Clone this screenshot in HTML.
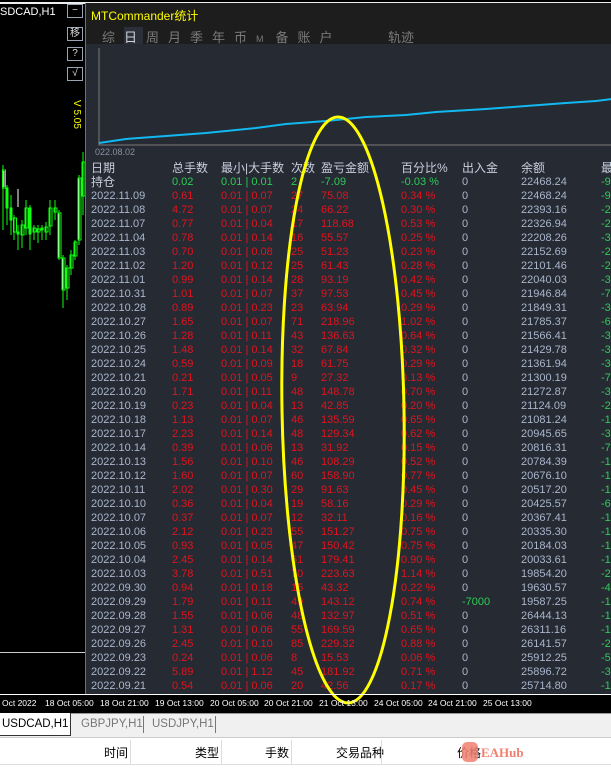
<!DOCTYPE html>
<html><head><meta charset="utf-8"><style>
*{margin:0;padding:0;box-sizing:border-box}
body{width:611px;height:770px;overflow:hidden;background:#000;position:relative;font-family:"Liberation Sans","Noto Sans CJK SC",sans-serif}
.a{position:absolute;white-space:nowrap}
#panel{position:absolute;left:85px;top:3px;width:526px;height:691px;background:#252a33;border-left:1px solid #6b7380}
#hdr{position:absolute;left:0;top:0;width:526px;height:41px;background:#1d1d1d}
.r{position:absolute;left:0;height:14px;font-size:11px;line-height:14px;color:#e0141e;width:526px}
.r span{position:absolute;top:0}
.r .d{left:5px;color:#aab6cc}.r .t{left:86px}.r .m{left:135px}.r .c{left:205px}.r .p{left:235px}.r .q{left:315px}.r .i{left:376px;color:#aab6cc}.r .b{left:435px;color:#aab6cc}.r .l{left:515px;color:#2ecc55}
.btn{position:absolute;left:67px;width:16px;height:14px;border:1px solid #9aa4b4;color:#ddd;font-size:10px;line-height:12px;text-align:center}
.ax span{position:absolute;top:0}
</style></head><body>
<div class="a" style="left:0;top:2px;width:611px;height:2px;background:#eee"></div>
<div class="a" style="left:0;top:6px;font-size:11px;color:#fff">SDCAD,H1</div>
<div class="btn" style="top:4px">−</div>
<div class="btn" style="top:27px">移</div>
<div class="btn" style="top:47px">?</div>
<div class="btn" style="top:67px">√</div>
<div class="a" style="top:100px;color:#ff0;font-size:10px;transform:rotate(90deg);transform-origin:left top;left:82px">V 5.05</div>
<svg class="a" style="left:0;top:140px" width="85" height="200">
<g stroke="#1f1" fill="none" stroke-width="1">
<path d="M3 25V90M2.5 30h3v18h-3zM7 45V85M6 48h2v20h-2zM11 55V95M10 68h2v12h-2zM14 75V100M13.5 78h3v14h-3zM18 85V110M17 92h2v2h-2zM22 80V108M21 85h3v10h-3zM26 60V95M25 68h3v20h-3zM30 65V110M29 68h2v26h-2zM34 85V100M33 88h3v4h-3zM38 85V103M37 89h3v3h-3zM42 85V100M41 88h2v2h-2zM46 82V100M45 87h3v5h-3zM50 60V95M49 68h3v18h-3zM55 60V80M54 68h3v4h-3zM59 70V120M58 73h3v45h-3zM63 115V168M62 118h3v32h-3zM67 125V160M66 128h3v20h-3zM71 110V135M70 115h3v13h-3zM75 100V120M74 102h3v14h-3zM79 35V105M78 38h3v62h-3zM83 12V75M82 22h3v34h-3z"/></g>
<g stroke="#fff" stroke-width="1"><path d="M4 31v16M18 49v18M59 74v43M63 119v30M79 39v60"/></g></svg>
<div class="a" style="left:0;top:652px;width:85px;height:1px;background:#ccc"></div>
<div id="panel">
<div id="hdr">
<div class="a" style="left:5px;top:4px;color:#ff0;font-size:12px">MTCommander统计</div>
<div class="a" style="left:38px;top:24px;width:19px;height:17px;background:#2a2f38"></div>
<div class="a" style="left:16px;top:24px;color:#7a7a7a;font-size:13px;letter-spacing:9px">综<span style="color:#cfd4dc">日</span>周月季年币<span style="font-size:9px;letter-spacing:12px">M</span>备账户</div>
<div class="a" style="left:302px;top:24px;color:#7a7a7a;font-size:13px">轨迹</div>
</div>
<svg class="a" style="left:0;top:41px" width="526" height="110">
<path d="M13 4V101H526" stroke="#7a7a7a" fill="none"/>
<path d="M13 99 L40 95 L80 92 L120 89 L170 84 L200 80 L240 77 L280 73 L320 71 L350 68 L400 65 L440 62 L480 59 L510 57 L526 55" stroke="#12b8f0" stroke-width="2" fill="none"/>
</svg>
<div class="a" style="left:9px;top:144px;color:#8892a0;font-size:9px">022.08.02</div>
<div class="r" style="top:158px;font-size:12px;color:#c8d0de"><span style="left:5px">日期</span><span style="left:86px">总手数</span><span style="left:135px">最小|大手数</span><span style="left:205px">次数</span><span style="left:235px">盈亏金额</span><span style="left:315px">百分比%</span><span style="left:376px">出入金</span><span style="left:435px">余额</span><span style="left:515px">最</span></div>
<div class="r" style="top:172px;color:#2ecc55"><span class="d" style="font-size:12px;color:#c8d0de">持仓</span><span class="t">0.02</span><span class="m">0.01 | 0.01</span><span class="c">2</span><span class="p">-7.09</span><span class="q">-0.03 %</span><span class="i">0</span><span class="b">22468.24</span><span class="l">-9</span></div>
<div class="r" style="top:186px"><span class="d">2022.11.09</span><span class="t">0.61</span><span class="m">0.01 | 0.07</span><span class="c">27</span><span class="p">75.08</span><span class="q">0.34 %</span><span class="i">0</span><span class="b">22468.24</span><span class="l">-9</span></div>
<div class="r" style="top:200px"><span class="d">2022.11.08</span><span class="t">4.72</span><span class="m">0.01 | 0.07</span><span class="c">24</span><span class="p">66.22</span><span class="q">0.30 %</span><span class="i">0</span><span class="b">22393.16</span><span class="l">-2</span></div>
<div class="r" style="top:214px"><span class="d">2022.11.07</span><span class="t">0.77</span><span class="m">0.01 | 0.04</span><span class="c">17</span><span class="p">118.68</span><span class="q">0.53 %</span><span class="i">0</span><span class="b">22326.94</span><span class="l">-2</span></div>
<div class="r" style="top:228px"><span class="d">2022.11.04</span><span class="t">0.78</span><span class="m">0.01 | 0.14</span><span class="c">16</span><span class="p">55.57</span><span class="q">0.25 %</span><span class="i">0</span><span class="b">22208.26</span><span class="l">-3</span></div>
<div class="r" style="top:242px"><span class="d">2022.11.03</span><span class="t">0.70</span><span class="m">0.01 | 0.08</span><span class="c">25</span><span class="p">51.23</span><span class="q">0.23 %</span><span class="i">0</span><span class="b">22152.69</span><span class="l">-2</span></div>
<div class="r" style="top:256px"><span class="d">2022.11.02</span><span class="t">1.20</span><span class="m">0.01 | 0.12</span><span class="c">25</span><span class="p">61.43</span><span class="q">0.28 %</span><span class="i">0</span><span class="b">22101.46</span><span class="l">-2</span></div>
<div class="r" style="top:270px"><span class="d">2022.11.01</span><span class="t">0.99</span><span class="m">0.01 | 0.14</span><span class="c">28</span><span class="p">93.19</span><span class="q">0.42 %</span><span class="i">0</span><span class="b">22040.03</span><span class="l">-3</span></div>
<div class="r" style="top:284px"><span class="d">2022.10.31</span><span class="t">1.01</span><span class="m">0.01 | 0.07</span><span class="c">37</span><span class="p">97.53</span><span class="q">0.45 %</span><span class="i">0</span><span class="b">21946.84</span><span class="l">-7</span></div>
<div class="r" style="top:298px"><span class="d">2022.10.28</span><span class="t">0.89</span><span class="m">0.01 | 0.23</span><span class="c">23</span><span class="p">63.94</span><span class="q">0.29 %</span><span class="i">0</span><span class="b">21849.31</span><span class="l">-3</span></div>
<div class="r" style="top:312px"><span class="d">2022.10.27</span><span class="t">1.65</span><span class="m">0.01 | 0.07</span><span class="c">71</span><span class="p">218.96</span><span class="q">1.02 %</span><span class="i">0</span><span class="b">21785.37</span><span class="l">-6</span></div>
<div class="r" style="top:326px"><span class="d">2022.10.26</span><span class="t">1.28</span><span class="m">0.01 | 0.11</span><span class="c">43</span><span class="p">136.63</span><span class="q">0.64 %</span><span class="i">0</span><span class="b">21566.41</span><span class="l">-3</span></div>
<div class="r" style="top:340px"><span class="d">2022.10.25</span><span class="t">1.48</span><span class="m">0.01 | 0.14</span><span class="c">32</span><span class="p">67.84</span><span class="q">0.32 %</span><span class="i">0</span><span class="b">21429.78</span><span class="l">-3</span></div>
<div class="r" style="top:354px"><span class="d">2022.10.24</span><span class="t">0.59</span><span class="m">0.01 | 0.09</span><span class="c">18</span><span class="p">61.75</span><span class="q">0.29 %</span><span class="i">0</span><span class="b">21361.94</span><span class="l">-3</span></div>
<div class="r" style="top:368px"><span class="d">2022.10.21</span><span class="t">0.21</span><span class="m">0.01 | 0.05</span><span class="c">9</span><span class="p">27.32</span><span class="q">0.13 %</span><span class="i">0</span><span class="b">21300.19</span><span class="l">-7</span></div>
<div class="r" style="top:382px"><span class="d">2022.10.20</span><span class="t">1.71</span><span class="m">0.01 | 0.11</span><span class="c">48</span><span class="p">148.78</span><span class="q">0.70 %</span><span class="i">0</span><span class="b">21272.87</span><span class="l">-3</span></div>
<div class="r" style="top:396px"><span class="d">2022.10.19</span><span class="t">0.23</span><span class="m">0.01 | 0.04</span><span class="c">13</span><span class="p">42.85</span><span class="q">0.20 %</span><span class="i">0</span><span class="b">21124.09</span><span class="l">-2</span></div>
<div class="r" style="top:410px"><span class="d">2022.10.18</span><span class="t">1.13</span><span class="m">0.01 | 0.07</span><span class="c">46</span><span class="p">135.59</span><span class="q">0.65 %</span><span class="i">0</span><span class="b">21081.24</span><span class="l">-1</span></div>
<div class="r" style="top:424px"><span class="d">2022.10.17</span><span class="t">2.23</span><span class="m">0.01 | 0.14</span><span class="c">48</span><span class="p">129.34</span><span class="q">0.62 %</span><span class="i">0</span><span class="b">20945.65</span><span class="l">-3</span></div>
<div class="r" style="top:438px"><span class="d">2022.10.14</span><span class="t">0.39</span><span class="m">0.01 | 0.06</span><span class="c">13</span><span class="p">31.92</span><span class="q">0.15 %</span><span class="i">0</span><span class="b">20816.31</span><span class="l">-7</span></div>
<div class="r" style="top:452px"><span class="d">2022.10.13</span><span class="t">1.56</span><span class="m">0.01 | 0.10</span><span class="c">46</span><span class="p">108.29</span><span class="q">0.52 %</span><span class="i">0</span><span class="b">20784.39</span><span class="l">-1</span></div>
<div class="r" style="top:466px"><span class="d">2022.10.12</span><span class="t">1.60</span><span class="m">0.01 | 0.07</span><span class="c">60</span><span class="p">158.90</span><span class="q">0.77 %</span><span class="i">0</span><span class="b">20676.10</span><span class="l">-1</span></div>
<div class="r" style="top:480px"><span class="d">2022.10.11</span><span class="t">2.02</span><span class="m">0.01 | 0.30</span><span class="c">29</span><span class="p">91.63</span><span class="q">0.45 %</span><span class="i">0</span><span class="b">20517.20</span><span class="l">-1</span></div>
<div class="r" style="top:494px"><span class="d">2022.10.10</span><span class="t">0.36</span><span class="m">0.01 | 0.04</span><span class="c">19</span><span class="p">58.16</span><span class="q">0.29 %</span><span class="i">0</span><span class="b">20425.57</span><span class="l">-6</span></div>
<div class="r" style="top:508px"><span class="d">2022.10.07</span><span class="t">0.37</span><span class="m">0.01 | 0.07</span><span class="c">12</span><span class="p">32.11</span><span class="q">0.16 %</span><span class="i">0</span><span class="b">20367.41</span><span class="l">-1</span></div>
<div class="r" style="top:522px"><span class="d">2022.10.06</span><span class="t">2.12</span><span class="m">0.01 | 0.23</span><span class="c">55</span><span class="p">151.27</span><span class="q">0.75 %</span><span class="i">0</span><span class="b">20335.30</span><span class="l">-1</span></div>
<div class="r" style="top:536px"><span class="d">2022.10.05</span><span class="t">0.93</span><span class="m">0.01 | 0.05</span><span class="c">47</span><span class="p">150.42</span><span class="q">0.75 %</span><span class="i">0</span><span class="b">20184.03</span><span class="l">-1</span></div>
<div class="r" style="top:550px"><span class="d">2022.10.04</span><span class="t">2.45</span><span class="m">0.01 | 0.14</span><span class="c">61</span><span class="p">179.41</span><span class="q">0.90 %</span><span class="i">0</span><span class="b">20033.61</span><span class="l">-1</span></div>
<div class="r" style="top:564px"><span class="d">2022.10.03</span><span class="t">3.78</span><span class="m">0.01 | 0.51</span><span class="c">70</span><span class="p">223.63</span><span class="q">1.14 %</span><span class="i">0</span><span class="b">19854.20</span><span class="l">-2</span></div>
<div class="r" style="top:578px"><span class="d">2022.09.30</span><span class="t">0.94</span><span class="m">0.01 | 0.18</span><span class="c">15</span><span class="p">43.32</span><span class="q">0.22 %</span><span class="i">0</span><span class="b">19630.57</span><span class="l">-4</span></div>
<div class="r" style="top:592px"><span class="d">2022.09.29</span><span class="t">1.79</span><span class="m">0.01 | 0.11</span><span class="c">49</span><span class="p">143.12</span><span class="q">0.74 %</span><span class="i" style="color:#2ecc55">-7000</span><span class="b">19587.25</span><span class="l">-1</span></div>
<div class="r" style="top:606px"><span class="d">2022.09.28</span><span class="t">1.55</span><span class="m">0.01 | 0.06</span><span class="c">48</span><span class="p">132.97</span><span class="q">0.51 %</span><span class="i">0</span><span class="b">26444.13</span><span class="l">-1</span></div>
<div class="r" style="top:620px"><span class="d">2022.09.27</span><span class="t">1.31</span><span class="m">0.01 | 0.06</span><span class="c">55</span><span class="p">169.59</span><span class="q">0.65 %</span><span class="i">0</span><span class="b">26311.16</span><span class="l">-1</span></div>
<div class="r" style="top:634px"><span class="d">2022.09.26</span><span class="t">2.45</span><span class="m">0.01 | 0.10</span><span class="c">85</span><span class="p">229.32</span><span class="q">0.88 %</span><span class="i">0</span><span class="b">26141.57</span><span class="l">-2</span></div>
<div class="r" style="top:648px"><span class="d">2022.09.23</span><span class="t">0.24</span><span class="m">0.01 | 0.06</span><span class="c">8</span><span class="p">15.53</span><span class="q">0.06 %</span><span class="i">0</span><span class="b">25912.25</span><span class="l">-5</span></div>
<div class="r" style="top:662px"><span class="d">2022.09.22</span><span class="t">5.89</span><span class="m">0.01 | 1.12</span><span class="c">45</span><span class="p">181.92</span><span class="q">0.71 %</span><span class="i">0</span><span class="b">25896.72</span><span class="l">-3</span></div>
<div class="r" style="top:676px"><span class="d">2022.09.21</span><span class="t">0.54</span><span class="m">0.01 | 0.06</span><span class="c">20</span><span class="p">42.56</span><span class="q">0.17 %</span><span class="i">0</span><span class="b">25714.80</span><span class="l">-1</span></div>
</div>
<svg class="a" style="left:0;top:0" width="611" height="770"><ellipse cx="343" cy="410" rx="61" ry="293" transform="rotate(-1 343 410)" stroke="#ffff00" stroke-width="3" fill="none"/></svg>
<div class="a" style="left:0;top:694px;width:611px;height:1px;background:#fff"></div>
<div class="a ax" style="left:0;top:698px;font-size:8.5px;color:#fff">
<span style="left:2px">Oct 2022</span><span style="left:45px">18 Oct 05:00</span><span style="left:100px">18 Oct 21:00</span><span style="left:155px">19 Oct 13:00</span><span style="left:210px">20 Oct 05:00</span><span style="left:264px">20 Oct 21:00</span><span style="left:319px">21 Oct 13:00</span><span style="left:374px">24 Oct 05:00</span><span style="left:428px">24 Oct 21:00</span><span style="left:483px">25 Oct 13:00</span></div>
<div class="a" style="left:0;top:713px;width:611px;height:24px;background:#f0f0f0;border-top:1px solid #999"></div>
<div class="a" style="left:0;top:713px;width:71px;height:23px;background:#fff;border-right:1px solid #333;border-bottom:1px solid #333;font-size:11.5px;line-height:23px;padding-left:2px;color:#000">USDCAD,H1</div>
<div class="a" style="left:81px;top:718px;font-size:11.5px;color:#777">GBPJPY,H1</div>
<div class="a" style="left:143px;top:716px;width:1px;height:17px;background:#777"></div>
<div class="a" style="left:152px;top:718px;font-size:11.5px;color:#777">USDJPY,H1</div>
<div class="a" style="left:215px;top:716px;width:1px;height:17px;background:#777"></div>
<div class="a" style="left:0;top:737px;width:611px;height:33px;background:#fff;border-top:1px solid #ccc"></div>
<div class="a" style="left:0;top:740px;width:611px;height:25px;border-bottom:1px solid #ddd;font-size:12px;color:#000">
<span class="a" style="left:104px;top:4px">时间</span><span class="a" style="left:130px;top:0;width:1px;height:25px;background:#ddd"></span>
<span class="a" style="left:195px;top:4px">类型</span><span class="a" style="left:221px;top:0;width:1px;height:25px;background:#ddd"></span>
<span class="a" style="left:265px;top:4px">手数</span><span class="a" style="left:291px;top:0;width:1px;height:25px;background:#ddd"></span>
<span class="a" style="left:336px;top:4px">交易品种</span><span class="a" style="left:381px;top:0;width:1px;height:25px;background:#ddd"></span>
<span class="a" style="left:457px;top:4px">价格</span></div>
<div class="a" style="left:462px;top:742px;width:16px;height:20px;border-radius:5px;background:#f08070;opacity:.85"></div>
<div class="a" style="left:481px;top:745px;font-size:13px;color:#f08070;font-family:'Liberation Serif',serif;font-weight:bold">EAHub</div>
</body></html>
